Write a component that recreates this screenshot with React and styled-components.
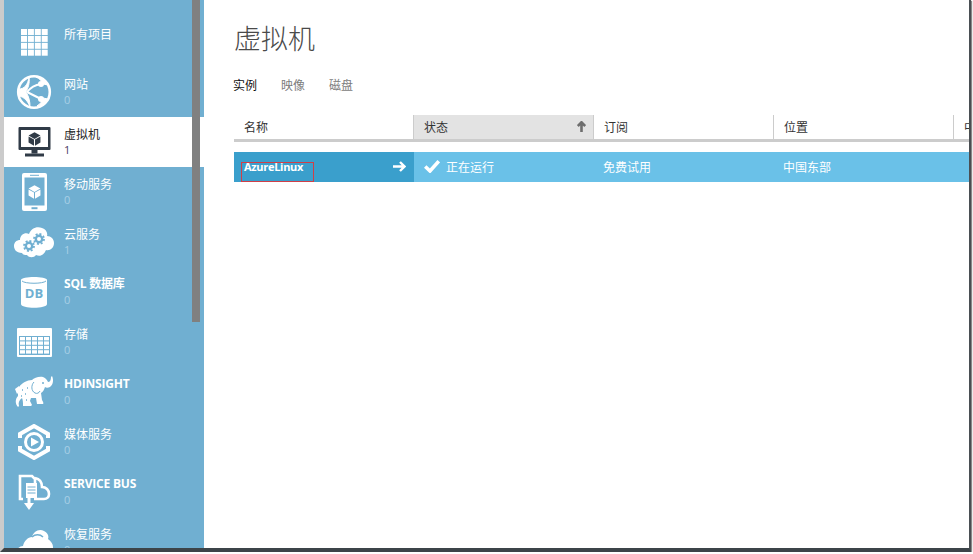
import React from "react"
import styled, {createGlobalStyle} from "styled-components"

const Global = createGlobalStyle`
  html, body { margin: 0; padding: 0; background: #fff; overflow: hidden; }
  body { font-family: "Noto Sans CJK SC", "Open Sans", sans-serif; }
`

const Frame = styled.div`
  width: 971px;
  height: 552px;
  box-sizing: border-box;
  display: flex;
  overflow: hidden;
  background: #fff;
  border-left: 4px solid #cbcbcb;
  border-right: 2px solid #4a4f53;
  border-bottom: 4px solid #3c4449;
  box-shadow: 1px 1px 1px #8a8a8a;
`

const Sidebar = styled.nav`
  position: relative;
  flex: 0 0 200px;
  padding-top: 17px;
  overflow: hidden;
  background: #70afd1;
`

const ScrollThumb = styled.div`
  position: absolute;
  top: 0;
  left: 188px;
  width: 8px;
  height: 322px;
  background: #808080;
`

const Row = styled.a`
  display: flex;
  height: 50px;
  background: ${p => (p.$active ? "#fff" : "transparent")};
  color: ${p => (p.$active ? "#222" : "#fff")};
`

const IconSlot = styled.div`
  flex: 0 0 60px;
  display: flex;
  align-items: center;
  justify-content: center;
`

const RowText = styled.div`
  padding-top: 9px;
  font-size: 12px;
  line-height: 15px;
`

const RowTitle = styled.div`
  font-weight: ${p => (p.$bold ? 700 : 400)};
  font-family: ${p => (p.$bold ? '"Open Sans", "Noto Sans CJK SC", sans-serif' : "inherit")};
  letter-spacing: ${p => (p.$bold ? "-0.2px" : "0")};
`

const RowCount = styled.div`
  margin-top: 1px;
  color: ${p => (p.$active ? "#4b3d63" : "#a9d0e6")};
  font-family: "Open Sans", sans-serif;
  font-size: 11px;
`

const Main = styled.main`
  flex: 1;
  min-width: 0;
  padding: 0 0 0 30px;
`

const Title = styled.h1`
  margin: 0;
  padding-top: 18px;
  font-size: 27px;
  line-height: 40px;
  font-weight: 300;
  color: #4a4a4a;
`

const Tabs = styled.div`
  display: flex;
  gap: 24px;
  margin-top: 18px;
  margin-left: -1px;
  font-size: 12px;
  line-height: 18px;
`

const Tab = styled.span`
  color: ${p => (p.$active ? "#111" : "#7c7c7c")};
`

const Table = styled.div`
  margin-top: 21px;
`

const HeadRow = styled.div`
  display: flex;
  height: 24px;
  border-bottom: 3px solid #cccccc;
`

const HeadCell = styled.div`
  flex: 0 0 ${p => (p.$first ? "179px" : "180px")};
  box-sizing: border-box;
  display: flex;
  align-items: center;
  justify-content: space-between;
  padding: 0 7px 2px 10px;
  font-size: 12px;
  color: #333;
  background: ${p => (p.$sorted ? "#e3e3e3" : "transparent")};
  border-left: ${p => (p.$first ? "none" : "1px solid #cccccc")};
`

const DataRow = styled.div`
  display: flex;
  height: 30px;
  margin-top: 10px;
  background: #6ac1e8;
  color: #fff;
  font-size: 12px;
`

const DataCell = styled.div`
  position: relative;
  flex: 0 0 180px;
  box-sizing: border-box;
  display: flex;
  align-items: center;
  gap: 6px;
  padding: 0 8px 2px 10px;
  background: ${p => (p.$selected ? "#3a9fcc" : "transparent")};
  justify-content: ${p => (p.$selected ? "space-between" : "flex-start")};
`

const PlainCell = styled(DataCell)`
  padding-left: 9px;
`

const LinkName = styled.span`
  font-family: "Open Sans", sans-serif;
  font-size: 11px;
  font-weight: 700;
  letter-spacing: -0.3px;
`

const Annotation = styled.div`
  position: absolute;
  left: 7px;
  top: 10px;
  width: 71px;
  height: 18px;
  border: 1px solid #cf3f48;
`

const GridIcon = () => (
  <svg width="27" height="27" viewBox="0 0 27 27" fill="#fff">
    {[0, 1, 2, 3].flatMap(r =>
      [0, 1, 2, 3].map(c => <rect key={`${r}-${c}`} x={c * 6.9} y={r * 6.9} width="6" height="6" />)
    )}
  </svg>
)

const GlobeIcon = () => (
  <svg width="36" height="36" viewBox="0 0 36 36" fill="none" stroke="#fff" strokeWidth="2.6">
    <circle cx="18" cy="18" r="15.8" />
    <path d="M3 15c5 0 9-4 10-12 1 6-1 11-3 15 3 5 4 9 4 15C12 27 8 23 3 22z" fill="#fff" strokeWidth="1" />
    <path d="M20 3c4 2 6 4 7 7l5 1c-1-4-6-8-12-8zM32 25l-5-1c-1 4-3 6-6 8 5 0 9-3 11-7z" fill="#fff" strokeWidth="1" />
    <path d="M11 18c4-5 8-7 14-8M11 18l14 7" strokeWidth="2" />
    <circle cx="25" cy="10" r="3" fill="#fff" stroke="none" />
    <circle cx="25" cy="25" r="3" fill="#fff" stroke="none" />
  </svg>
)

const Cube = ({x, y, s, color}) => (
  <g transform={`translate(${x} ${y}) scale(${s})`} fill={color}>
    <path d="M0-8 7-4 0 0-7-4z" />
    <path d="M-7-3 -.6.6V8L-7 4z" />
    <path d="M7-3 .6.6V8L7 4z" />
  </g>
)

const MonitorIcon = () => (
  <svg width="33" height="30" viewBox="0 0 33 30">
    <rect x="0.5" width="32" height="23" rx="1" fill="#303b47" />
    <rect x="3" y="3" width="27" height="17" fill="#fff" />
    <rect x="13.5" y="23" width="6" height="3.5" fill="#303b47" />
    <rect x="7" y="26.5" width="19" height="3" fill="#303b47" />
    <Cube x={16.5} y={12} s={0.85} color="#303b47" />
  </svg>
)

const PhoneIcon = () => (
  <svg width="25" height="38" viewBox="0 0 25 38">
    <rect width="25" height="38" rx="2" fill="#fff" />
    <rect x="2.5" y="4.5" width="20" height="28" fill="#70afd1" />
    <rect x="8" y="1.8" width="9" height="1" fill="#70afd1" />
    <rect x="9.5" y="34.2" width="6" height="2" fill="#70afd1" />
    <Cube x={12.5} y={19} s={0.85} color="#fff" />
  </svg>
)

const CloudGearIcon = () => (
  <svg width="40" height="33" viewBox="0 0 40 33">
    <path
      d="M8 27C2 27 0 23 0 20c0-4 3-6 6-6 0-5 5-8 9-6 2-5 7-8 13-6 4 1 6 5 5 8 4 0 7 3 7 7 0 5-4 8-8 7-2 5-6 7-10 5-2 3-7 3-9 0-2 0-4 0-5-2z"
      fill="#fff"
    />
    <g fill="none" stroke="#70afd1">
      <circle cx="15" cy="20" r="3.2" strokeWidth="2.4" />
      <circle cx="15" cy="20" r="5" strokeWidth="1.8" strokeDasharray="2 1.9" />
      <circle cx="25" cy="13" r="3.2" strokeWidth="2.4" />
      <circle cx="25" cy="13" r="5" strokeWidth="1.8" strokeDasharray="2 1.9" />
    </g>
  </svg>
)

const DbIcon = () => (
  <svg width="26" height="34" viewBox="0 0 26 34">
    <path d="M0 5C0 1 26 1 26 5v24c0 5-26 5-26 0z" fill="#fff" />
    <path d="M1 6c3 3 21 3 24 0" fill="none" stroke="#70afd1" strokeWidth="1" />
    <text x="13" y="23" textAnchor="middle" fontFamily="Open Sans, sans-serif" fontSize="13" fontWeight="700" fill="#70afd1">
      DB
    </text>
  </svg>
)

const TableIcon = () => (
  <svg width="35" height="29" viewBox="0 0 35 29">
    <rect width="35" height="29" rx="1" fill="#fff" />
    <rect x="2" y="8" width="31" height="19" fill="#70afd1" />
    {[0, 1, 2, 3].flatMap(r =>
      [0, 1, 2, 3, 4].map(c => (
        <rect key={`${r}-${c}`} x={3 + c * 6} y={9 + r * 4.4} width="5" height="3.4" fill="#fff" />
      ))
    )}
  </svg>
)

const ElephantIcon = () => (
  <svg width="40" height="33" viewBox="0 0 40 33" fill="#fff">
    <path d="M5 11c3-4 8-7 13-7 2-2 7-4 11-3 3 1 4 3 5 5 2 0 3-2 3-5l1-1c2 4 1 9-2 11-2 1-4 1-5 0-1 3-2 5-4 6l1 7c1 2 2 3 1 4h-6l-1-6h-5l-1 3 2 4-1 1H9c0-3 0-6-1-8-3 2-4 5-3 8l-1 1c-3-3-3-8 0-11 0-3 0-6 1-9z" />
    <path d="M5 10 1 13l2 5 2-2z" />
    <path d="M20 6c-3 3-3 9 1 11 2 1 4 0 5-2" fill="none" stroke="#70afd1" strokeWidth="1" />
    <path d="M8 14h1M11 18h1M7 20h1M13 12h1M12 24h1" stroke="#70afd1" strokeWidth="1.4" />
    <circle cx="29" cy="7" r="1" fill="#70afd1" />
  </svg>
)

const MediaIcon = () => (
  <svg width="32" height="36" viewBox="0 0 32 36" fill="none" stroke="#fff" strokeWidth="4">
    <path d="M2 14v-4l14-8 14 8v4" />
    <path d="M2 22v4l14 8 14-8v-4" />
    <circle cx="16" cy="18" r="8.5" strokeWidth="3" />
    <path d="M13 13.5 21 18l-8 4.5z" fill="#fff" stroke="none" />
  </svg>
)

const BusIcon = () => (
  <svg width="33" height="37" viewBox="0 0 33 37" fill="none" stroke="#fff" strokeWidth="2.6">
    <path d="M5 25H2V2h12l3 3v6" />
    <path d="M17 4c5 1 7 5 7 9 4 0 7 3 7 7 0 3-2 5-5 5H16" />
    <path d="M8 9h11v15H8z" fill="#fff" stroke="none" />
    <path d="M9.5 13h8M9.5 16h8M9.5 19h8" stroke="#70afd1" strokeWidth="1" />
    <path d="M11 24v7" strokeWidth="3" />
    <path d="M6 29h10l-5 7z" fill="#fff" stroke="none" />
  </svg>
)

const RecoveryIcon = () => (
  <svg width="38" height="30" viewBox="0 0 38 30" fill="#fff">
    <path d="M0 30c0-7 4-11 8-11 1-5 5-9 9-9 1-5 7-9 12-6 4 2 5 5 4 8 3 2 5 5 5 8v10z" />
    <path d="M17 10c3-3 8-3 11 0" fill="none" stroke="#70afd1" strokeWidth="1.5" />
  </svg>
)

const ArrowRight = () => (
  <svg width="13" height="11" viewBox="0 0 13 11" fill="none" stroke="#fff" strokeWidth="2.4">
    <path d="M0 5.5h11M7 1l4.5 4.5L7 10" />
  </svg>
)

const ArrowUp = () => (
  <svg width="9" height="11" viewBox="0 0 9 11" fill="none" stroke="#6e6e6e" strokeWidth="2.6">
    <path d="M4.5 11V1.5M.8 5l3.7-3.7L8.2 5" />
  </svg>
)

const Check = () => (
  <svg width="16" height="13" viewBox="0 0 16 13" fill="none" stroke="#fff" strokeWidth="3.6">
    <path d="M1.2 6.5 6 11 14.8 1.2" />
  </svg>
)

const items = [
  {title: "所有项目", icon: <GridIcon />},
  {title: "网站", count: 0, icon: <GlobeIcon />},
  {title: "虚拟机", count: 1, icon: <MonitorIcon />, active: true},
  {title: "移动服务", count: 0, icon: <PhoneIcon />},
  {title: "云服务", count: 1, icon: <CloudGearIcon />},
  {title: "SQL 数据库", count: 0, icon: <DbIcon />, bold: true},
  {title: "存储", count: 0, icon: <TableIcon />},
  {title: "HDINSIGHT", count: 0, icon: <ElephantIcon />, bold: true},
  {title: "媒体服务", count: 0, icon: <MediaIcon />},
  {title: "SERVICE BUS", count: 0, icon: <BusIcon />, bold: true},
  {title: "恢复服务", count: 0, icon: <RecoveryIcon />},
]

export default function App() {
  return (
    <>
      <Global />
      <Frame>
        <Sidebar>
          {items.map(it => (
            <Row key={it.title} $active={it.active}>
              <IconSlot>{it.icon}</IconSlot>
              <RowText>
                <RowTitle $bold={it.bold}>{it.title}</RowTitle>
                {it.count !== undefined && <RowCount $active={it.active}>{it.count}</RowCount>}
              </RowText>
            </Row>
          ))}
          <ScrollThumb />
        </Sidebar>
        <Main>
          <Title>虚拟机</Title>
          <Tabs>
            <Tab $active>实例</Tab>
            <Tab>映像</Tab>
            <Tab>磁盘</Tab>
          </Tabs>
          <Table>
            <HeadRow>
              <HeadCell $first>名称</HeadCell>
              <HeadCell $sorted>
                状态
                <ArrowUp />
              </HeadCell>
              <HeadCell>订阅</HeadCell>
              <HeadCell>位置</HeadCell>
              <HeadCell>中</HeadCell>
            </HeadRow>
            <DataRow>
              <DataCell $selected>
                <LinkName>AzureLinux</LinkName>
                <ArrowRight />
                <Annotation />
              </DataCell>
              <DataCell>
                <Check />
                正在运行
              </DataCell>
              <PlainCell>免费试用</PlainCell>
              <PlainCell>中国东部</PlainCell>
            </DataRow>
          </Table>
        </Main>
      </Frame>
    </>
  )
}
